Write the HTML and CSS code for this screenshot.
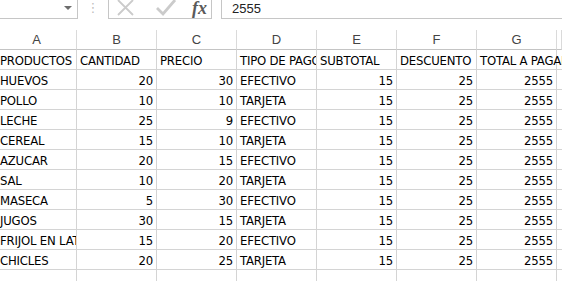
FILE: index.html
```html
<!DOCTYPE html>
<html lang="es">
<head>
  <meta charset="UTF-8" />
  <title>Ventas</title>
  <link rel="stylesheet" href="styles.css">
</head>
<body>
  <div class="formula-bar">
    <div class="name-box"><span class="drop"></span></div>
    <div class="grip">⋮</div>
    <div class="fx-buttons">
      <svg class="fx-btn" width="22" height="18" viewBox="0 0 22 18">
        <path d="M3 0 L18 15 M18 0 L3 15" stroke="#cbcbcb" stroke-width="1.8" fill="none"/>
      </svg>
      <svg class="fx-btn" width="26" height="18" viewBox="0 0 26 18">
        <path d="M4 8 L10 14 L22 0" stroke="#cbcbcb" stroke-width="2.8" fill="none"/>
      </svg>
      <span class="fx-label">fx</span>
    </div>
    <div class="formula-input">2555</div>
  </div>

  <div class="sheet">
    <div class="col-head">A</div>
    <div class="col-head">B</div>
    <div class="col-head">C</div>
    <div class="col-head">D</div>
    <div class="col-head">E</div>
    <div class="col-head">F</div>
    <div class="col-head">G</div>
    <div class="col-head"></div>

    <div class="cell">PRODUCTOS</div>
    <div class="cell">CANTIDAD</div>
    <div class="cell">PRECIO</div>
    <div class="cell">TIPO DE PAGO</div>
    <div class="cell">SUBTOTAL</div>
    <div class="cell">DESCUENTO</div>
    <div class="cell spill">TOTAL A PAGAR</div>
    <div class="cell"></div>
  </div>

  <script>
    const rows = [
      ['HUEVOS', 20, 30, 'EFECTIVO'],
      ['POLLO', 10, 10, 'TARJETA'],
      ['LECHE', 25, 9, 'EFECTIVO'],
      ['CEREAL', 15, 10, 'TARJETA'],
      ['AZUCAR', 20, 15, 'EFECTIVO'],
      ['SAL', 10, 20, 'TARJETA'],
      ['MASECA', 5, 30, 'EFECTIVO'],
      ['JUGOS', 30, 15, 'TARJETA'],
      ['FRIJOL EN LATA', 15, 20, 'EFECTIVO'],
      ['CHICLES', 20, 25, 'TARJETA']
    ];

    const sheet = document.querySelector('.sheet');

    function addCell(value) {
      const div = document.createElement('div');
      div.className = typeof value === 'number' ? 'cell num' : 'cell';
      div.textContent = value;
      sheet.appendChild(div);
    }

    rows.forEach(r => {
      [r[0], r[1], r[2], r[3], 15, 25, 2555, ''].forEach(addCell);
    });

    // empty row at the bottom
    for (let i = 0; i < 8; i++) addCell('');
  </script>
</body>
</html>
```

FILE: styles.css
```css
body {
  margin: 0;
  background: #fff;
  color: #000;
  font-family: 'DejaVu Sans Condensed', 'Liberation Sans', sans-serif;
  overflow: hidden;
}

.formula-bar {
  display: flex;
  height: 19px;
  box-sizing: border-box;
}

.name-box {
  position: relative;
  width: 78px;
  border-right: 1px solid #c6c6c6;
  border-bottom: 1px solid #c6c6c6;
  box-sizing: border-box;
}

.name-box .drop {
  position: absolute;
  left: 64px;
  top: 6px;
  border-left: 4px solid transparent;
  border-right: 4px solid transparent;
  border-top: 4px solid #6d6d6d;
}

.grip {
  width: 30px;
  text-align: center;
  color: #b8b8b8;
  font-size: 13px;
  line-height: 15px;
}

.fx-buttons {
  display: flex;
  align-items: flex-start;
  width: 104px;
  border: 1px solid #c6c6c6;
  border-top: none;
  box-sizing: border-box;
  padding-left: 6px;
}

.fx-btn {
  display: block;
  margin-right: 16px;
}

.fx-label {
  color: #5a5a5a;
  font-family: 'Liberation Serif', serif;
  font-style: italic;
  font-weight: bold;
  font-size: 18px;
  line-height: 16px;
  margin-left: -3px;
}

.formula-input {
  flex: 1;
  margin-left: 9px;
  border-left: 1px solid #c6c6c6;
  border-bottom: 1px solid #c6c6c6;
  padding-left: 10px;
  font-family: 'Liberation Sans', sans-serif;
  font-size: 13px;
  line-height: 17px;
  color: #222;
}

.sheet {
  display: grid;
  grid-template-columns: repeat(7, 80px) 5px;
  grid-auto-rows: 20px;
  margin-top: 11px;
  margin-left: -3px;
}

.col-head {
  border-right: 1px solid #dadada;
  border-bottom: 1px solid #c4c4c4;
  box-sizing: border-box;
  text-align: center;
  color: #444;
  font-family: 'Liberation Sans', sans-serif;
  font-size: 13px;
  line-height: 20px;
}

.cell {
  border-right: 1px solid #d4d4d4;
  border-bottom: 1px solid #d4d4d4;
  box-sizing: border-box;
  padding: 1px 2px 0 3px;
  font-size: 13px;
  letter-spacing: -0.2px;
  line-height: 20px;
  white-space: nowrap;
  overflow: hidden;
}

.cell.num {
  text-align: right;
  padding-right: 3px;
}

.cell.spill {
  overflow: visible;
}
```
